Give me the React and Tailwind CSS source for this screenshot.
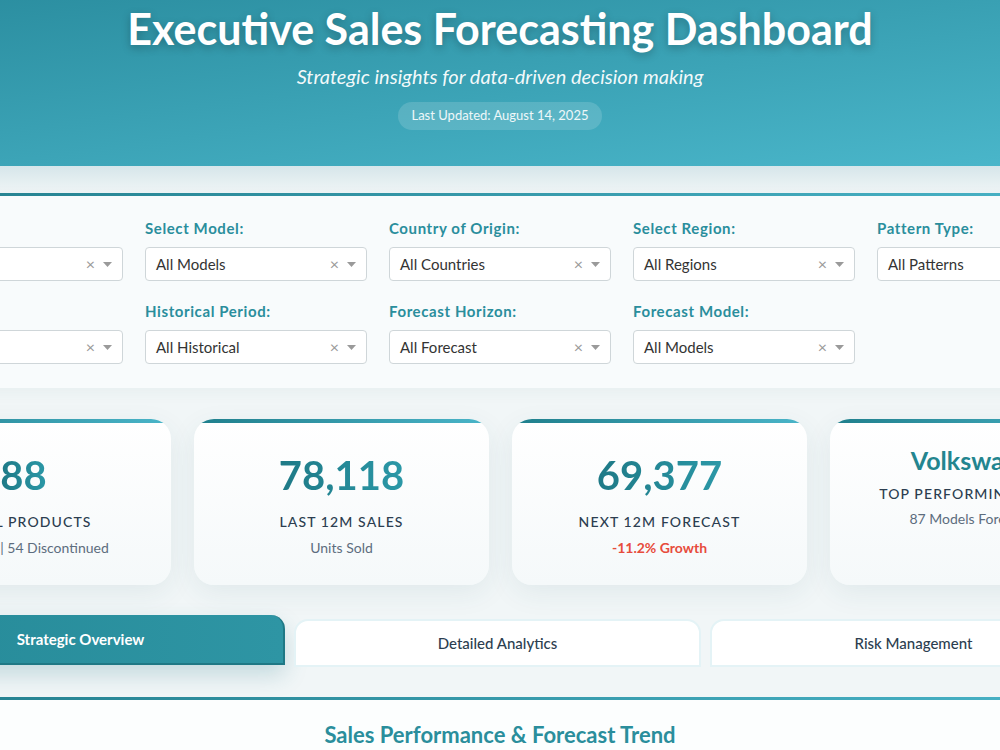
import { memo } from "react";

// --- Filter dropdown (Dash-style select) ---
const FilterSelect = ({ label, value }) => (
  <div className="w-[222px]">
    <label className="block text-[15px] leading-5 font-bold tracking-[0.6px] text-[#2a8e9c] mb-[9px]">{label}</label>
    <div className="h-[34px] bg-white border border-[#cfd6d9] rounded-[4px] flex items-center pl-[10px] pr-[10px]">
      <span className="flex-1 text-[15px] text-[#333]">{value}</span>
      <span className="text-[16px] leading-none text-[#9a9a9a] mr-[8px]">×</span>
      <svg width="9" height="5" viewBox="0 0 9 5" className="text-[#9a9a9a]">
        <path d="M0 0 H9 L4.5 5 Z" fill="currentColor" />
      </svg>
    </div>
  </div>
);

// --- KPI card ---
const KpiCard = ({ value, label, sub, valueClass, labelClass, subClass }) => (
  <div className="w-[295px] h-[166px] rounded-[20px] overflow-hidden bg-gradient-to-b from-white to-[#f5f9fa] shadow-[0_8px_28px_rgba(40,90,105,0.08)] flex flex-col items-center">
    <div className="w-full h-[4px] shrink-0 bg-gradient-to-r from-[#1f7f8c] to-[#4ab5c9]"></div>
    <div className={valueClass}>{value}</div>
    <div className={labelClass}>{label}</div>
    <div className={subClass}>{sub}</div>
  </div>
);

const filtersTop = [
  { label: "Brand:", value: "All Brands" },
  { label: "Select Model:", value: "All Models" },
  { label: "Country of Origin:", value: "All Countries" },
  { label: "Select Region:", value: "All Regions" },
  { label: "Pattern Type:", value: "All Patterns" },
];

const filtersBottom = [
  { label: "Lifecycle:", value: "All Status" },
  { label: "Historical Period:", value: "All Historical" },
  { label: "Forecast Horizon:", value: "All Forecast" },
  { label: "Forecast Model:", value: "All Models" },
];

const bigValue = "pt-[26px] text-[40px] leading-[52px] font-bold bg-gradient-to-r from-[#1e7986] to-[#2b98a7] bg-clip-text text-transparent";
const cardLabel = "mt-[11px] text-[14px] leading-5 tracking-[0.08em] uppercase font-medium text-[#2c3e50]";
const subText = "mt-[6px] text-[14px] leading-5 text-[#5d6d7e]";

const inactiveTab = "w-[407px] h-[48px] rounded-t-[14px] bg-white border-2 border-[#e4f3f6] flex items-center justify-center text-[15px] font-medium text-[#2c3e50]";

const App = () => {
  return (
    <div className="h-screen overflow-hidden bg-[#f1f6f7] font-['Lato','Noto_Sans',sans-serif]">
      <div className="flex justify-center">
        <div className="w-[1250px] shrink-0">
          {/* Header */}
          <header className="bg-gradient-to-br from-[#2a8d9f] to-[#4bb8cc] h-[166px] pt-[3px] flex flex-col items-center text-white">
            <h1 className="text-[43px] leading-[52px] font-bold [text-shadow:0_3px_8px_rgba(0,0,0,0.25)]">
              Executive Sales Forecasting Dashboard
            </h1>
            <p className="mt-[9px] text-[20px] leading-6 italic text-white/95">
              Strategic insights for data-driven decision making
            </p>
            <div className="mt-[14px] h-[28px] px-[13px] rounded-full bg-white/15 flex items-center text-[13px] text-white/90">
              Last Updated: August 14, 2025
            </div>
          </header>

          <div className="bg-[linear-gradient(to_bottom,#d6e6ea_0px,#f1f6f7_28px)] pt-[27px]">
            {/* Filters */}
            <section className="bg-[#f8fbfc] rounded-xl overflow-hidden shadow-[0_4px_16px_rgba(40,90,105,0.05)]">
              <div className="h-[3px] bg-gradient-to-r from-[#237f8d] to-[#4ab5c9]"></div>
              <div className="px-[26px] pt-[22px] pb-[24px] flex flex-col gap-[20px]">
                <div className="flex gap-[22px]">
                  {filtersTop.map((f) => (
                    <FilterSelect key={f.label} label={f.label} value={f.value} />
                  ))}
                </div>
                <div className="flex gap-[22px]">
                  {filtersBottom.map((f) => (
                    <FilterSelect key={f.label} label={f.label} value={f.value} />
                  ))}
                </div>
              </div>
            </section>

            {/* KPI cards */}
            <section className="mt-[31px] flex gap-[23px] pl-[1px]">
              <KpiCard value="88" label="Total Products" sub="34 Active | 54 Discontinued" valueClass={bigValue} labelClass={cardLabel} subClass={subText} />
              <KpiCard value="78,118" label="Last 12M Sales" sub="Units Sold" valueClass={bigValue} labelClass={cardLabel} subClass={subText} />
              <KpiCard value="69,377" label="Next 12M Forecast" sub="-11.2% Growth" valueClass={bigValue} labelClass={cardLabel} subClass="mt-[6px] text-[14px] leading-5 font-bold text-[#e74c3c]" />
              <KpiCard
                value="Volkswagen"
                label="Top Performing Brand"
                sub="87 Models Forecasted"
                valueClass="pt-[20px] text-[25px] leading-[34px] font-bold text-[#23858f]"
                labelClass="mt-[7px] text-[14px] leading-5 tracking-[0.08em] uppercase font-medium text-[#2c3e50]"
                subClass="mt-[5px] text-[14px] leading-5 text-[#5d6d7e]"
              />
            </section>

            {/* Tabs */}
            <nav className="mt-[34px] flex items-start gap-[9px] pl-[3px]">
              <div className="w-[407px] -mt-[4px] h-[50px] rounded-t-[14px] bg-gradient-to-r from-[#268a98] to-[#2e95a4] border-r-2 border-b-2 border-[#1f7885] shadow-[0_10px_22px_rgba(35,120,135,0.22)] flex items-center justify-center text-[15px] font-bold text-white">
                Strategic Overview
              </div>
              <div className={inactiveTab}>Detailed Analytics</div>
              <div className={inactiveTab}>Risk Management</div>
            </nav>

            {/* Chart section */}
            <section className="mt-[30px] bg-[#fcfefe] rounded-xl overflow-hidden">
              <div className="h-[3px] bg-gradient-to-r from-[#237f8d] to-[#4ab5c9]"></div>
              <h2 className="pt-[22px] text-center text-[22px] leading-[26px] font-bold text-[#2a8e9c]">
                Sales Performance &amp; Forecast Trend
              </h2>
              <div className="h-[320px]"></div>
            </section>
          </div>
        </div>
      </div>
    </div>
  );
};

export default memo(App);
